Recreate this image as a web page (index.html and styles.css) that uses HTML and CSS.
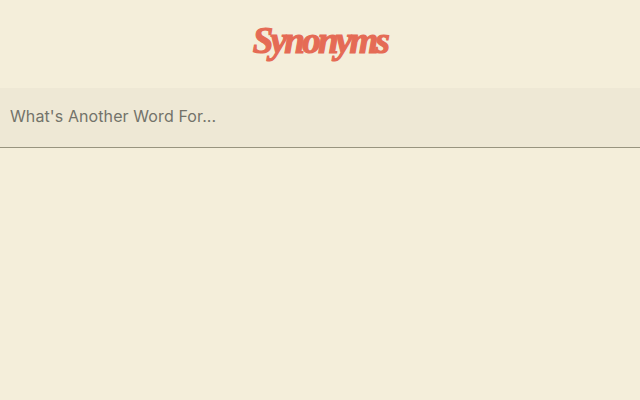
FILE: index.html
```html
<!DOCTYPE html>
<html lang="en">

<head>
  <meta charset="UTF-8" />
  <meta name="viewport" content="width=device-width, initial-scale=1.0" />
  <title>Synonyms</title>
  <link rel="stylesheet" href="styles.css">
</head>

<body>
  <h1 class="title">Synonyms</h1>
  <form class="search-form">
    <input type="text" class="search-input" placeholder="What's Another Word For..." />
  </form>
</body>

</html>
```

FILE: styles.css
```css
* {
  box-sizing: border-box;
  margin: 0;
  padding: 0;
}

body {
  background-color: #f4eeda;
  min-height: 100vh;
  font-family: Inter, 'Open Sans', sans-serif;
}

.title {
  height: 88px;
  padding-bottom: 7px;
  display: flex;
  align-items: center;
  justify-content: center;
  color: #e56b55;
  font-family: 'Liberation Serif', serif;
  font-size: 37px;
  font-style: italic;
  font-weight: bold;
  letter-spacing: -2.7px;
  -webkit-text-stroke: 1.2px #e56b55;
}

.search-form {
  display: flex;
}

.search-input {
  width: 100%;
  height: 60px;
  padding: 0 10px 3px;
  border: none;
  border-bottom: 1px solid #98947f;
  border-radius: 0;
  outline: none;
  background-color: #eee8d5;
  color: #73736a;
  font-family: inherit;
  font-size: 16px;
  letter-spacing: 0.1px;
}

.search-input::placeholder {
  color: #73736a;
  opacity: 1;
}
```
